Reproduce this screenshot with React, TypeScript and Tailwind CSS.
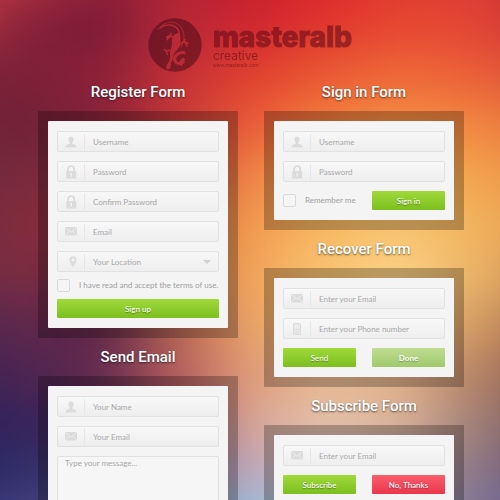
import type { ReactNode } from "react";

// Horizontal colour bands, top to bottom, that melt into the page backdrop.
const bands: string[][] = [
  ["#cf4242", "#b23040", "#8c2038", "#b42434", "#c41e2c", "#dc262a", "#e03a30", "#dc3c34", "#c02c38"],
  ["#b43a40", "#86203a", "#7a1a36", "#b42838", "#d02630", "#e0362e", "#e84832", "#e24634", "#cc3438"],
  ["#7c2238", "#7c2036", "#8c2038", "#c43036", "#e0402e", "#ea5a34", "#ee6a38", "#ec6038", "#d8503c"],
  ["#702438", "#702238", "#842238", "#c43838", "#ea5c38", "#f4803e", "#f49244", "#f28840", "#e4743e"],
  ["#702a3e", "#782a3c", "#8c2c3a", "#cc4a38", "#f08448", "#f6a24c", "#f6b258", "#f4a44e", "#ea9048"],
  ["#742c3e", "#842c3c", "#8c2c3c", "#d06838", "#f29a50", "#f8b860", "#f8c470", "#f2b45c", "#e69c54"],
  ["#6c2c44", "#7c2c42", "#702840", "#c86c44", "#f2a458", "#f8c474", "#fad488", "#ecb468", "#cc8e54"],
  ["#502850", "#60284c", "#5c2448", "#b06450", "#eca468", "#f2b870", "#f4c47c", "#d49c64", "#a87450"],
  ["#3c2458", "#4c2450", "#682c50", "#b85c5c", "#e09c78", "#e8b890", "#e0b088", "#b88464", "#8c5c54"],
  ["#2c225c", "#36245c", "#442450", "#905468", "#d8a498", "#e4c2ac", "#dcb49c", "#a08078", "#785860"],
  ["#242460", "#32306c", "#443868", "#8c6884", "#bcacc4", "#ccb4b4", "#b89c9c", "#8c7888", "#685478"],
  ["#3c3878", "#484486", "#505084", "#7890b4", "#90c8e6", "#a8b8d0", "#9494b0", "#7c78a0", "#605890"],
];

function Backdrop() {
  return (
    <div aria-hidden="true" className="absolute -inset-12 -z-10 flex flex-col blur-[20px]">
      {bands.map((colors, i) => (
        <div key={i} className="flex-1" style={{ background: `linear-gradient(90deg, ${colors.join(", ")})` }} />
      ))}
    </div>
  );
}

function UserIcon() {
  return (
    <svg viewBox="0 0 12 12" className="size-3" fill="currentColor" aria-hidden="true">
      <path d="M6 .5C4.300 .5 3.400 1.700 3.500 3.400C3.600 4.900 4.200 5.800 4.700 6.500V7.700C3.300 8.500 .8 8.700 .5 10.400V11.500H11.500V10.400C11.200 8.700 8.700 8.500 7.300 7.700V6.500C7.800 5.800 8.400 4.900 8.500 3.400C8.600 1.700 7.700 .5 6 .5Z" />
    </svg>
  );
}

function LockIcon() {
  return (
    <svg viewBox="0 0 12 14" className="h-3.5 w-3" aria-hidden="true">
      <path d="M3 7V4.200A3.100 3.100 0 0 1 9.200 4.200V7" fill="none" stroke="currentColor" strokeWidth="1.800" />
      <path fill="currentColor" fillRule="evenodd" d="M1.200 6.200H11.200V13.400H1.200ZM6.200 7.800A1.100 1.100 0 0 0 5.600 9.800V11.800H6.800V9.800A1.100 1.100 0 0 0 6.200 7.800Z" />
    </svg>
  );
}

function MailIcon() {
  return (
    <svg viewBox="0 0 12 9" className="h-[9px] w-3" aria-hidden="true">
      <rect width="12" height="8.500" rx="1.200" fill="currentColor" />
      <path d="M.8 .9L6 5.300L11.200 .9M.8 7.900L4.200 4.300M11.200 7.900L7.800 4.300" fill="none" stroke="#f4f4f4" strokeWidth=".8" />
    </svg>
  );
}

function PinIcon() {
  return (
    <svg viewBox="0 0 8 12" className="ml-1 h-3 w-2" fill="currentColor" fillRule="evenodd" aria-hidden="true">
      <path d="M4 .3A3.600 3.600 0 0 0 .4 3.900C.4 6.400 2.900 8.500 4 11.800C5.100 8.500 7.600 6.400 7.600 3.900A3.600 3.600 0 0 0 4 .3ZM4 2.300A1.600 1.600 0 1 1 4 5.500A1.600 1.600 0 0 1 4 2.300Z" />
    </svg>
  );
}

function PhoneIcon() {
  return (
    <svg viewBox="0 0 8 12" className="h-3 w-2" aria-hidden="true">
      <rect x=".6" y=".6" width="6.800" height="11" rx="1" fill="#ececec" stroke="currentColor" strokeWidth="1.100" />
      <path d="M1 6.300H7M2.200 8.400H5.800M2.200 10H5.800" stroke="currentColor" strokeWidth=".9" />
    </svg>
  );
}

const fieldBox =
  "flex h-[21px] items-center rounded-[2px] border border-[#e1e1e1] bg-linear-to-b from-[#f8f8f8] to-[#eeeeee]";
const iconCell = "flex h-4 w-[27px] shrink-0 items-center justify-center border-r border-[#e6e6e6] text-[#dbdbdb]";
const fieldText = "h-full w-full min-w-0 bg-transparent px-2 text-[8px] outline-none";

function Field({ icon, label, type = "text" }: { icon: ReactNode; label: string; type?: string }) {
  return (
    <div className={fieldBox}>
      <span className={iconCell}>{icon}</span>
      <input type={type} aria-label={label} placeholder={label} className={`${fieldText} placeholder:text-[#a8a8a8]`} />
    </div>
  );
}

function LocationField() {
  return (
    <div className={`${fieldBox} relative`}>
      <span className={iconCell}>
        <PinIcon />
      </span>
      <select aria-label="Your Location" className={`${fieldText} appearance-none text-[#a8a8a8]`}>
        <option>Your Location</option>
      </select>
      <svg viewBox="0 0 8 4" className="pointer-events-none absolute right-[7px] h-1 w-2" aria-hidden="true">
        <path d="M0 0H8L4 4Z" fill="#d2d2d2" />
      </svg>
    </div>
  );
}

function Check({ label }: { label: string }) {
  return (
    <label className="flex items-center gap-[9px] text-[8px] leading-[13px] whitespace-nowrap text-[#a0a0a0]">
      <input
        type="checkbox"
        className="size-[13px] shrink-0 appearance-none rounded-[2px] border border-[#d9d9d9] bg-[#f5f5f5] checked:bg-[#94d12a]"
      />
      {label}
    </label>
  );
}

const tones = {
  green: "from-[#a0d93a] to-[#7cbf1e] font-medium text-shadow-[0_1px_1px_rgb(0_0_0/0.4)]",
  pale: "from-[#c0dd92] to-[#a0c96c] font-bold text-shadow-[0_1px_1px_rgb(0_0_0/0.3)]",
  red: "from-[#f95c6c] to-[#ea364c] font-medium text-shadow-[0_1px_1px_rgb(0_0_0/0.35)]",
};

function Button({ children, tone = "green" }: { children: ReactNode; tone?: keyof typeof tones }) {
  return (
    <button
      type="button"
      className={`h-[19px] w-full rounded-[1px] bg-linear-to-b text-center text-[8px] text-white ${tones[tone]}`}
    >
      {children}
    </button>
  );
}

function Card({ title, children }: { title: string; children: ReactNode }) {
  return (
    <section>
      <h2 className="h-[38px] pt-[8px] text-center font-[Roboto,sans-serif] text-[15px] leading-[22px] font-medium text-white text-shadow-[0_1px_2px_rgb(0_0_0/0.6)]">
        {title}
      </h2>
      <div className="rounded-[1px] bg-black/25 p-2.5">
        <form className="flex flex-col gap-[9px] rounded-[1px] bg-[#f4f4f4] px-[9px] py-2.5">{children}</form>
      </div>
    </section>
  );
}

function Logo() {
  return (
    <header className="flex h-[73px] justify-center gap-[11px] pt-[18px]">
      <svg viewBox="0 0 160 162" className="size-[54px]" role="img" aria-label="Gecko emblem">
        <circle cx="80" cy="81" r="80" fill="#500c18" fillOpacity=".58" />
        <g fill="none" stroke="#b82a36" strokeLinecap="round" strokeLinejoin="round">
          <path d="M29 36C42 12 78 2 97 27C113 49 108 69 98 88" strokeWidth="2.500" />
          <path d="M35 30C57 14 86 20 92 42C96 60 84 70 78 88" strokeWidth="4" />
          <path d="M97 78L106 70L119 76M106 70L111 64M109 72L116 84" strokeWidth="5" />
          <path d="M76 61L66 52L55 58M66 52L68 46M66 53L56 65" strokeWidth="5" />
          <path d="M107 104C93 102 79 110 79 123C79 136 91 140 105 132M98 131L105 124M101 134L99 139" strokeWidth="9" />
          <path d="M66 96L54 99L57 110M54 99L48 95" strokeWidth="4" />
        </g>
        <path
          d="M84 47C75 48 70 59 71 73C72 88 64 97 65 111C66 123 62 131 56 140C51 149 54 155 61 154C69 152 66 143 68 136C72 126 76 121 76 112C77 101 94 93 96 79C98 67 96 52 93 43Z"
          fill="#b82a36"
        />
      </svg>
      <div className="pt-[5px] font-[Inter,sans-serif] text-[#6a0c18] opacity-60">
        <p className="text-[28px] leading-[28px] font-extrabold [-webkit-text-stroke:1px_#6a0c18]">masteralb</p>
        <p className="text-[12px] leading-[10px]">creative</p>
        <p className="font-[Roboto,sans-serif] text-[5px] leading-[8px]">www.masteralb.com</p>
      </div>
    </header>
  );
}

export default function App() {
  return (
    <main className="relative isolate h-screen overflow-hidden bg-[#702a3e] font-[Lato,sans-serif]">
      <Backdrop />
      <Logo />
      <div className="grid grid-cols-2 gap-[26px] pr-9 pl-[38px]">
        <div>
          <Card title="Register Form">
            <Field icon={<UserIcon />} label="Username" />
            <Field icon={<LockIcon />} label="Password" type="password" />
            <Field icon={<LockIcon />} label="Confirm Password" type="password" />
            <Field icon={<MailIcon />} label="Email" type="email" />
            <LocationField />
            <div className="flex flex-col gap-[7px] -mt-0.5">
              <Check label="I have read and accept the terms of use." />
              <Button>Sign up</Button>
            </div>
          </Card>
          <Card title="Send Email">
            <Field icon={<UserIcon />} label="Your Name" />
            <Field icon={<MailIcon />} label="Your Email" type="email" />
            <textarea
              aria-label="Message"
              placeholder="Type your message..."
              className="h-24 resize-none rounded-[2px] border border-[#e1e1e1] bg-[#f6f6f6] px-[7px] text-[8px] leading-[13px] outline-none placeholder:text-[#a8a8a8]"
            />
          </Card>
        </div>
        <div>
          <Card title="Sign in Form">
            <Field icon={<UserIcon />} label="Username" />
            <Field icon={<LockIcon />} label="Password" type="password" />
            <div className="grid grid-cols-2 items-center gap-4">
              <Check label="Remember me" />
              <Button>Sign in</Button>
            </div>
          </Card>
          <Card title="Recover Form">
            <Field icon={<MailIcon />} label="Enter your Email" type="email" />
            <Field icon={<PhoneIcon />} label="Enter your Phone number" type="tel" />
            <div className="grid grid-cols-2 gap-4">
              <Button>Send</Button>
              <Button tone="pale">Done</Button>
            </div>
          </Card>
          <Card title="Subscribe Form">
            <Field icon={<MailIcon />} label="Enter your Email" type="email" />
            <div className="grid grid-cols-2 gap-4">
              <Button>Subscribe</Button>
              <Button tone="red">No, Thanks</Button>
            </div>
          </Card>
        </div>
      </div>
    </main>
  );
}
